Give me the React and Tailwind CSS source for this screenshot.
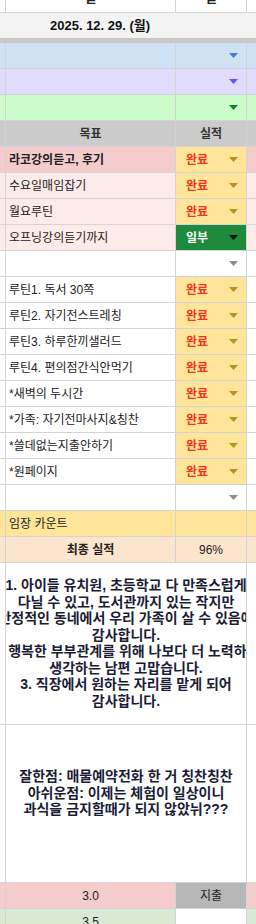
const LINE = 'border-[#d3d3d3]'

function Tri({ color = '#b8901c' }) {
  return (
    <svg width="9" height="5" viewBox="0 0 9 5" className="shrink-0">
      <polygon points="0,0 9,0 4.5,5" fill={color} />
    </svg>
  )
}

function Row({ left, main, second, right, h = 'h-[26px]', children, cell }) {
  return (
    <div className={`flex ${h} border-b ${LINE}`}>
      <div className={`w-[5px] ${left}`} />
      <div className={`w-[170px] border-l ${LINE} ${main} flex items-center overflow-hidden`}>{children}</div>
      <div className={`w-[71px] border-l ${LINE} ${second} flex items-center`}>{cell}</div>
      <div className={`flex-1 border-l ${LINE} ${right}`} />
    </div>
  )
}

function Done() {
  return (
    <div className="flex w-full items-center justify-between pl-[10px] pr-[8px]">
      <span className="font-bold text-[#f2331f]">완료</span>
      <Tri />
    </div>
  )
}

function Empty({ color = '#8c8c8c' }) {
  return (
    <div className="flex w-full items-center justify-end pr-[8px]">
      <Tri color={color} />
    </div>
  )
}

const routines = [
  '루틴1. 독서 30쪽',
  '루틴2. 자기전스트레칭',
  '루틴3. 하루한끼샐러드',
  '루틴4. 편의점간식안먹기',
  '*새벽의 두시간',
  '*가족: 자기전마사지&칭찬',
  '*쓸데없는지출안하기',
  '*원페이지',
]

const thanks = [
  '1. 아이들 유치원, 초등학교 다 만족스럽게',
  '다닐 수 있고, 도서관까지 있는 작지만',
  '안정적인 동네에서 우리 가족이 살 수 있음에',
  '감사합니다.',
  '2. 행복한 부부관계를 위해 나보다 더 노력하고',
  '생각하는 남편 고맙습니다.',
  '3. 직장에서 원하는 자리를 맡게 되어',
  '감사합니다.',
]

const review = [
  '잘한점: 매물예약전화 한 거 칭찬칭찬',
  '아쉬운점: 이제는 체험이 일상이니',
  '과식을 금지할때가 되지 않았뉘???',
]

export default function App() {
  return (
    <div className="w-[256px] h-[924px] overflow-hidden bg-white text-[12px] text-[#222] font-['Liberation_Sans','Noto_Sans_CJK_KR',sans-serif]">
      {/* row cut off above the view */}
      <div className={`flex h-[13px] border-b ${LINE} overflow-hidden`}>
        <div className="w-[5px]" />
        <div className={`w-[170px] border-l ${LINE} flex justify-center`}>
          <span className="-mt-[12px] font-bold text-[13px]">일</span>
        </div>
        <div className={`w-[71px] border-l ${LINE} flex justify-center`}>
          <span className="-mt-[12px] font-bold text-[13px]">일</span>
        </div>
        <div className={`flex-1 border-l ${LINE}`} />
      </div>

      {/* date */}
      <div className="h-[25px] bg-[#f3f3f3] flex items-center pl-[50px]">
        <span className="font-bold text-[13px] text-[#111]">2025. 12. 29. (월)</span>
      </div>
      <div className="h-[5px] bg-[#c8c8c8]" />

      <Row left="bg-[#cfe2f3]" main="bg-[#cfe2f3]" second="bg-[#cfe2f3]" right="bg-[#cfe2f3]" cell={<Empty color="#3f7fd0" />} />
      <Row left="bg-[#e1dcfd]" main="bg-[#e1dcfd]" second="bg-[#e1dcfd]" right="bg-[#e1dcfd]" cell={<Empty color="#6a4ff0" />} />
      <Row left="bg-[#cdfccb]" main="bg-[#cdfccb]" second="bg-[#cdfccb]" right="bg-[#cdfccb]" cell={<Empty color="#16801c" />} />

      <Row
        left="bg-[#cbcbcb]" main="bg-[#cbcbcb] justify-center" second="bg-[#cbcbcb]" right="bg-[#cbcbcb]"
        cell={<span className="w-full text-center font-bold text-[#333]">실적</span>}
      >
        <span className="font-bold text-[#333]">목표</span>
      </Row>

      <Row left="bg-[#f4cccc]" main="bg-[#f4cccc] pl-[3px]" second="bg-[#ffe59a]" right="bg-[#f4cccc]" cell={<Done />}>
        <span className="font-bold">라코강의듣고, 후기</span>
      </Row>
      <Row left="bg-[#fdebea]" main="bg-[#fdebea] pl-[3px]" second="bg-[#ffe59a]" right="bg-[#fdebea]" cell={<Done />}>
        <span>수요일매임잡기</span>
      </Row>
      <Row left="bg-[#fdebea]" main="bg-[#fdebea] pl-[3px]" second="bg-[#ffe59a]" right="bg-[#fdebea]" cell={<Done />}>
        <span>월요루틴</span>
      </Row>
      <Row
        left="bg-[#fdebea]" main="bg-[#fdebea] pl-[3px]" second="bg-[#1d8a3c]" right="bg-[#fdebea]"
        cell={
          <div className="flex w-full items-center justify-between pl-[10px] pr-[8px]">
            <span className="font-bold text-white">일부</span>
            <Tri color="#111" />
          </div>
        }
      >
        <span>오프닝강의듣기까지</span>
      </Row>
      <Row left="bg-white" main="bg-white" second="bg-white" right="bg-white" cell={<Empty />} />

      {routines.map((r) => (
        <Row key={r} left="bg-white" main="bg-white pl-[3px]" second="bg-[#ffe59a]" right="bg-white" cell={<Done />}>
          <span className="whitespace-nowrap">{r}</span>
        </Row>
      ))}

      <Row left="bg-white" main="bg-white" second="bg-white" right="bg-white" cell={<Empty />} />

      <Row left="bg-[#ffe59a]" main="bg-[#ffe59a] pl-[3px]" second="bg-[#ffe59a]" right="bg-[#ffe59a]">
        <span>임장 카운트</span>
      </Row>
      <Row
        left="bg-[#fce5cd]" main="bg-[#fce5cd] justify-center" second="bg-[#fce5cd]" right="bg-[#fce5cd]"
        cell={<span className="w-full text-center">96%</span>}
      >
        <span className="font-bold">최종 실적</span>
      </Row>

      {/* gratitude */}
      <div className={`flex h-[162px] border-b ${LINE}`}>
        <div className="w-[5px]" />
        <div className={`w-[241px] border-l ${LINE} overflow-hidden flex flex-col items-center pt-[14px] text-[14px] leading-[16.5px] font-bold text-[#1a1d35]`}>
          {thanks.map((t, i) => (
            <div key={i} className="whitespace-nowrap">{t}</div>
          ))}
        </div>
        <div className={`flex-1 border-l ${LINE}`} />
      </div>

      {/* review */}
      <div className={`flex h-[158px] border-b ${LINE}`}>
        <div className="w-[5px]" />
        <div className={`w-[241px] border-l ${LINE} overflow-hidden flex flex-col items-center pt-[43px] text-[14px] leading-[16.5px] font-bold text-[#1a1d35]`}>
          {review.map((t, i) => (
            <div key={i} className="whitespace-nowrap">{t}</div>
          ))}
        </div>
        <div className={`flex-1 border-l ${LINE}`} />
      </div>

      <Row
        left="bg-[#f4cccc]" main="bg-[#f4cccc] justify-center" second="bg-[#b7b7b7]" right="bg-[#f4cccc]"
        cell={<span className="w-full text-center">지출</span>}
      >
        <span>3.0</span>
      </Row>
      <Row left="bg-[#d9ead3]" main="bg-[#d9ead3] justify-center" second="bg-white" right="bg-[#d9ead3]">
        <span>3.5</span>
      </Row>
    </div>
  )
}
